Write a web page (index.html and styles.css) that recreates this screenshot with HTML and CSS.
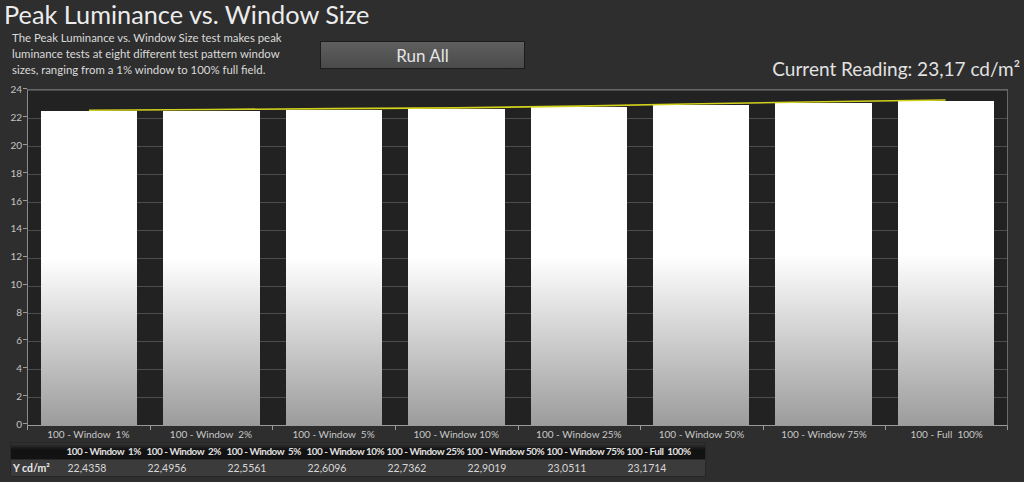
FILE: index.html
```html
<!DOCTYPE html>
<html lang="en">
<head>
<meta charset="utf-8">
<title>Peak Luminance vs. Window Size</title>
<link rel="stylesheet" href="styles.css">
</head>
<body>
<div class="page">
  <header class="head">
    <h1 class="title">Peak Luminance vs. Window Size</h1>
    <div class="subrow">
      <p class="desc">The Peak Luminance vs. Window Size test makes peak<br>luminance tests at eight different test pattern window<br>sizes, ranging from a 1% window to 100% full field.</p>
      <button class="run" type="button">Run All</button>
      <div class="reading">Current Reading: 23,17 cd/m²</div>
    </div>
  </header>

  <section class="chart">
    <div class="yaxis">
      <div class="ylab"><span>24</span><i></i></div>
      <div class="ylab"><span>22</span><i></i></div>
      <div class="ylab"><span>20</span><i></i></div>
      <div class="ylab"><span>18</span><i></i></div>
      <div class="ylab"><span>16</span><i></i></div>
      <div class="ylab"><span>14</span><i></i></div>
      <div class="ylab"><span>12</span><i></i></div>
      <div class="ylab"><span>10</span><i></i></div>
      <div class="ylab"><span>8</span><i></i></div>
      <div class="ylab"><span>6</span><i></i></div>
      <div class="ylab"><span>4</span><i></i></div>
      <div class="ylab"><span>2</span><i></i></div>
      <div class="ylab"><span>0</span><i></i></div>
    </div>
    <div class="plotcol">
      <div class="plot">
        <div class="cat"><div class="bar" style="height:313.7px"></div></div>
        <div class="cat"><div class="bar" style="height:314.5px"></div></div>
        <div class="cat"><div class="bar" style="height:315.4px"></div></div>
        <div class="cat"><div class="bar" style="height:316.1px"></div></div>
        <div class="cat"><div class="bar" style="height:317.9px"></div></div>
        <div class="cat"><div class="bar" style="height:320.2px"></div></div>
        <div class="cat"><div class="bar" style="height:322.3px"></div></div>
        <div class="cat"><div class="bar" style="height:324.0px"></div></div>
        <svg class="trend" viewBox="0 0 979 335" preserveAspectRatio="none">
          <polyline points="61,20.3 183.4,19.5 305.8,18.6 428.1,17.9 550.5,16.1 672.9,13.8 795.3,11.7 917.6,10.0" fill="none" stroke="#d2d21e" stroke-width="1.6"/>
        </svg>
      </div>
      <div class="xaxis">
        <div class="xlab">100 - Window&nbsp; 1%</div>
        <div class="xlab">100 - Window&nbsp; 2%</div>
        <div class="xlab">100 - Window&nbsp; 5%</div>
        <div class="xlab">100 - Window 10%</div>
        <div class="xlab">100 - Window 25%</div>
        <div class="xlab">100 - Window 50%</div>
        <div class="xlab">100 - Window 75%</div>
        <div class="xlab last">100 - Full&nbsp; 100%</div>
      </div>
    </div>
  </section>

  <table class="data">
    <thead>
      <tr>
        <th class="rowhead"></th>
        <th>100 - Window&nbsp; 1%</th>
        <th>100 - Window&nbsp; 2%</th>
        <th>100 - Window&nbsp; 5%</th>
        <th>100 - Window 10%</th>
        <th>100 - Window 25%</th>
        <th>100 - Window 50%</th>
        <th>100 - Window 75%</th>
        <th>100 - Full&nbsp; 100%</th>
      </tr>
    </thead>
    <tbody>
      <tr>
        <td class="rowhead">Y cd/m²</td>
        <td>22,4358</td>
        <td>22,4956</td>
        <td>22,5561</td>
        <td>22,6096</td>
        <td>22,7362</td>
        <td>22,9019</td>
        <td>23,0511</td>
        <td>23,1714</td>
      </tr>
    </tbody>
  </table>
</div>
</body>
</html>
```

FILE: styles.css
```css
* { box-sizing: border-box; }

html, body {
  margin: 0;
  padding: 0;
  background: #2e2e2e;
}

.page {
  width: 1024px;
  height: 482px;
  overflow: hidden;
  font-family: Lato, "Open Sans", sans-serif;
  color: #dcdcdc;
}

.head {
  height: 84px;
}

.title {
  margin: 0;
  padding-left: 4px;
  font-size: 25.3px;
  line-height: 28px;
  font-weight: 400;
  color: #ececec;
  white-space: nowrap;
}

.subrow {
  display: flex;
  height: 56px;
}

.desc {
  margin: 0;
  width: 320px;
  padding: 2px 0 0 12px;
  font-size: 11.4px;
  line-height: 16px;
  color: #dadada;
  white-space: nowrap;
}

.run {
  margin-top: 13px;
  width: 205px;
  height: 28px;
  border: 1px solid #1c1c1c;
  background: linear-gradient(#5f5f5f, #4a4a4a);
  color: #e4e4e4;
  font-family: Lato, "Open Sans", sans-serif;
  font-size: 17px;
  padding: 0;
}

.reading {
  margin-left: auto;
  align-self: flex-end;
  padding: 0 4px 3px 0;
  font-size: 19px;
  line-height: 24px;
  color: #e2e2e2;
  white-space: nowrap;
}

.chart {
  display: flex;
  padding-top: 5px;
}

.yaxis {
  width: 27px;
  margin-top: -14px;
  display: flex;
  flex-direction: column;
}

.ylab {
  height: 27.9px;
  display: flex;
  align-items: center;
  justify-content: flex-end;
  font-size: 10px;
  color: #c4c4c4;
}

.ylab span {
  padding-right: 1px;
}

.ylab i {
  width: 4px;
  height: 1px;
  background: #9a9a9a;
}

.plotcol {
  width: 981px;
}

.plot {
  position: relative;
  height: 337px;
  display: flex;
  align-items: flex-end;
  border-top: 1px solid #666;
  border-left: 1px solid #8a8a8a;
  border-right: 1px solid #6a6a6a;
  border-bottom: 1px solid #9a9a9a;
  background-color: #222;
  background-image: repeating-linear-gradient(to top, transparent 0 26.9px, #4c4c4c 26.9px 27.9px);
}

.cat {
  flex: 1;
  height: 100%;
  display: flex;
  align-items: flex-end;
  padding: 0 13px;
}

.bar {
  width: 100%;
  background: linear-gradient(#ffffff 0%, #ffffff 47%, #9c9c9c 100%);
}

.trend {
  position: absolute;
  left: 0;
  top: 0;
  width: 100%;
  height: 100%;
}

.xaxis {
  display: flex;
  height: 16px;
}

.xlab {
  position: relative;
  flex: 1;
  text-align: center;
  font-size: 10px;
  line-height: 16px;
  color: #c8c8c8;
  white-space: nowrap;
}

.xlab::before {
  content: "";
  position: absolute;
  left: 0;
  top: 0;
  width: 1px;
  height: 4px;
  background: #9a9a9a;
}

.xlab.last::after {
  content: "";
  position: absolute;
  right: 0;
  top: 0;
  width: 1px;
  height: 4px;
  background: #9a9a9a;
}

.data {
  margin-left: 10px;
  border-collapse: collapse;
  table-layout: fixed;
  width: 695px;
  border: 1px solid #262626;
}

.data th,
.data td {
  width: 80px;
  padding: 0 0 0 2px;
  height: 17px;
  text-align: left;
  white-space: nowrap;
  overflow: visible;
}

.data .rowhead {
  width: 55px;
}

.data thead tr {
  background: linear-gradient(#353535, #111 40%, #131313);
}

.data th {
  font-size: 9.9px;
  font-weight: 700;
  letter-spacing: -0.45px;
  color: #e0e0e0;
  line-height: 16px;
  padding-left: 1px;
}

.data tbody tr {
  background: #3b3b3b;
}

.data td {
  font-size: 10.5px;
  color: #d6d6d6;
  line-height: 16px;
  border-top: 1px solid #2a2a2a;
}

.data td.rowhead {
  font-weight: 700;
  color: #e8e8e8;
  padding-left: 2px;
}
```
